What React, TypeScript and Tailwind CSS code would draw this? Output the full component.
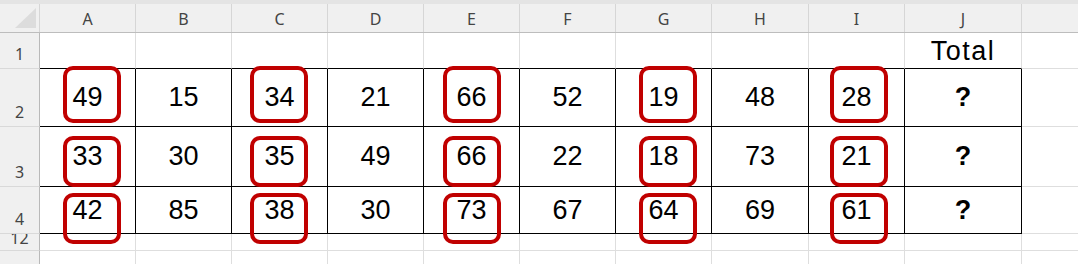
import React from 'react';

const COLS = ['A', 'B', 'C', 'D', 'E', 'F', 'G', 'H', 'I', 'J'];
// widths include the right gridline
const COL_W = ['w-[96px]', 'w-[96px]', 'w-[96px]', 'w-[96px]', 'w-[96px]', 'w-[96px]', 'w-[96px]', 'w-[97px]', 'w-[96px]', 'w-[117px]'];

const ROWS: { label: string; h: string; cells: string[] }[] = [
  { label: '2', h: 'h-[58px]', cells: ['49', '15', '34', '21', '66', '52', '19', '48', '28', '?'] },
  { label: '3', h: 'h-[60px]', cells: ['33', '30', '35', '49', '66', '22', '18', '73', '21', '?'] },
  { label: '4', h: 'h-[47px]', cells: ['42', '85', '38', '30', '73', '67', '64', '69', '61', '?'] },
];

// red boxes round the odd columns — free-floating marks drawn over the sheet
const BOX_X = ['left-[63px]', 'left-[250px]', 'left-[443px]', 'left-[639px]', 'left-[830px]'];
const BOX_Y = [
  { top: 'top-[66px]', h: 'h-[57px]' },
  { top: 'top-[136px]', h: 'h-[51px]' },
  { top: 'top-[193px]', h: 'h-[51px]' },
];

const cellFont = "font-['Liberation_Sans',Arial,sans-serif] text-[27px] text-black";
const headFont = "font-['Noto_Sans',sans-serif] text-[16px] text-[#444]";

function RowHead({ label, h, clip }: { label: string; h: string; clip?: boolean }) {
  return (
    <div
      className={`${h} w-[40px] shrink-0 overflow-hidden border-r border-b border-r-[#b9b9b9] border-b-[#d9d9d9] bg-[#f0f0f0] flex justify-center ${
        clip ? 'items-start' : 'items-end pb-[6px]'
      } ${headFont}`}
    >
      <span className={clip ? '-mt-[4px] leading-none' : 'leading-none'}>{label}</span>
    </div>
  );
}

export default function App() {
  return (
    <div className="relative w-[1078px] h-[264px] overflow-hidden bg-white select-none">
      {/* strip above the column header */}
      <div className="h-[4px] bg-[#e4e4e4]" />

      {/* column header */}
      <div className="flex h-[29px] border-b border-[#bdbdbd] bg-[#f0f0f0]">
        <div className="relative w-[40px] shrink-0 border-r border-[#d6d6d6]">
          <svg className="absolute left-0 top-0" width="40" height="28" viewBox="0 0 40 28">
            <polygon points="36,4 15,24 36,24" fill="#dcdcdc" />
          </svg>
        </div>
        {COLS.map((c, i) => (
          <div
            key={c}
            className={`${COL_W[i]} shrink-0 border-r border-[#d6d6d6] flex items-center justify-center pt-[2px] ${headFont}`}
          >
            {c}
          </div>
        ))}
        <div className="flex-1" />
      </div>

      {/* row 1 */}
      <div className="flex">
        <RowHead label="1" h="h-[36px]" />
        {COLS.map((c, i) => (
          <div
            key={c}
            className={`${COL_W[i]} h-[36px] shrink-0 border-r border-b border-r-[#dedede] border-b-black flex items-center justify-center pt-[2px] ${cellFont}`}
          >
            {c === 'J' ? <span className="tracking-[1.5px]">Total</span> : ''}
          </div>
        ))}
        <div className="flex-1 h-[36px] border-b border-[#dedede]" />
      </div>

      {/* rows 2-4, the bordered block */}
      {ROWS.map((r) => (
        <div key={r.label} className="flex">
          <RowHead label={r.label} h={r.h} />
          {r.cells.map((v, i) => (
            <div
              key={i}
              className={`${COL_W[i]} ${r.h} shrink-0 border-r border-b border-black flex items-center justify-center ${cellFont} ${
                v === '?' ? 'font-bold' : ''
              }`}
            >
              {v}
            </div>
          ))}
          <div className={`flex-1 ${r.h} border-b border-[#dedede]`} />
        </div>
      ))}

      {/* row 12 (rows in between hidden) */}
      <div className="flex">
        <RowHead label="12" h="h-[17px]" clip />
        {COLS.map((c, i) => (
          <div key={c} className={`${COL_W[i]} h-[17px] shrink-0 border-r border-b border-[#dedede]`} />
        ))}
        <div className="flex-1 h-[17px] border-b border-[#dedede]" />
      </div>

      {/* next row, cut by the window */}
      <div className="flex">
        <div className="h-[20px] w-[40px] shrink-0 border-r border-[#b9b9b9] bg-[#f0f0f0]" />
        {COLS.map((c, i) => (
          <div key={c} className={`${COL_W[i]} h-[20px] shrink-0 border-r border-[#dedede]`} />
        ))}
      </div>

      {/* red highlight boxes */}
      {BOX_Y.map((y, ri) =>
        BOX_X.map((x, ci) => (
          <div
            key={`${ri}-${ci}`}
            className={`pointer-events-none absolute ${x} ${y.top} ${y.h} w-[58px] rounded-[10px] border-[4px] border-[#c00000]`}
          />
        ))
      )}
    </div>
  );
}
